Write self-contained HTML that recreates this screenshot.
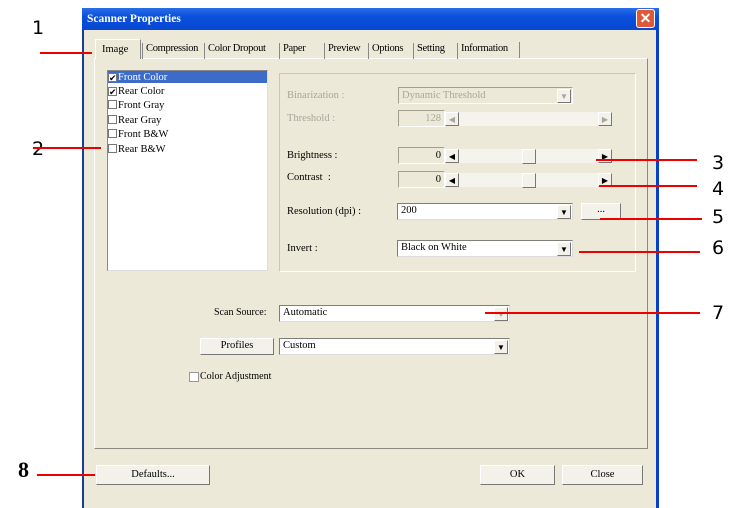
<!DOCTYPE html>
<html><head><style>
*{margin:0;padding:0;box-sizing:border-box}
body{width:734px;height:493px;background:#fff;position:relative;overflow:hidden;font-family:"Liberation Serif",serif;font-size:10.5px;color:#000}
.a{position:absolute}
.win{left:82px;top:8px;width:577px;height:500px;background:#ece9d8;border-left:2px solid #1a3c9c;border-right:3px solid #0841c8}
.title{left:82px;top:8px;width:577px;height:22px;background:linear-gradient(#2a6de8,#0a4fdc 40%,#0848d2);color:#fff;font-weight:bold;font-size:11.5px;padding:5px 0 0 5px}
.x{left:636px;top:9px;width:19px;height:19px;background:#dc5a3a;border:1px solid #fff;border-radius:3px;color:#fff;font:bold 14px "Liberation Sans",sans-serif;text-align:center;line-height:16px}
.panel{left:94px;top:58px;width:554px;height:391px;border:1px solid #fff;border-right-color:#8a8a80;border-bottom-color:#8a8a80}
.tab{top:43px;height:16px;font-size:10.5px;letter-spacing:-0.3px;border-left:1px solid #888;padding-left:3px;white-space:nowrap}
.sunk{background:#ece9d8;border:1px solid #a0a090;border-right-color:#fff;border-bottom-color:#fff}
.white{background:#fff;border:1px solid #7f7f78;border-right-color:#ddd;border-bottom-color:#ddd}
.btn{background:#f2f1ea;border:1px solid #fff;border-right-color:#777;border-bottom-color:#777;text-align:center;font-size:10.5px}
.dd{width:14px;height:14px;font-size:8px;text-align:center;line-height:13px}
.gray{color:#a8a69a}
.ln{background:#e00;height:2px}
.num{font:19px "DejaVu Sans","Liberation Sans",sans-serif}
.li{left:108px;height:11px;font-size:10.5px;line-height:11px}
.cb{display:inline-block;width:9px;height:9px;border:1px solid #777;margin-right:1px;vertical-align:-1px;font-size:9px;line-height:8px;text-align:center}
.trk{background:#f4f3ec}
</style></head><body>
<div class="a win"></div>
<div class="a title">Scanner Properties</div>
<div class="a x">✕</div>
<div class="a panel"></div>
<div class="a" style="left:95px;top:39px;width:46px;height:20px;background:#ece9d8;border:1px solid #fff;border-bottom:none;border-right-color:#888;padding:4px 0 0 6px">Image</div>
<div class="a tab" style="left:142px">Compression</div>
<div class="a tab" style="left:204px">Color Dropout</div>
<div class="a tab" style="left:279px">Paper</div>
<div class="a tab" style="left:324px">Preview</div>
<div class="a tab" style="left:368px">Options</div>
<div class="a tab" style="left:413px">Setting</div>
<div class="a tab" style="left:457px">Information</div>
<div class="a" style="left:519px;top:42px;width:1px;height:16px;background:#888"></div>

<div class="a" style="left:107px;top:70px;width:161px;height:201px;background:#fff;border:1px solid #888;border-right-color:#ddd;border-bottom-color:#ddd"></div>
<div class="a" style="left:108px;top:71px;width:159px;height:12px;background:#3d6cc8"></div>
<div class="a li" style="top:72px;color:#fff"><span class="cb" style="background:#fff;color:#000">✔</span>Front Color</div>
<div class="a li" style="top:86px"><span class="cb">✔</span>Rear Color</div>
<div class="a li" style="top:100px"><span class="cb"></span>Front Gray</div>
<div class="a li" style="top:115px"><span class="cb"></span>Rear Gray</div>
<div class="a li" style="top:129px"><span class="cb"></span>Front B&amp;W</div>
<div class="a li" style="top:144px"><span class="cb"></span>Rear B&amp;W</div>

<div class="a" style="left:279px;top:73px;width:357px;height:199px;border:1px solid #c8c6b8;border-right-color:#fff;border-bottom-color:#fff"></div>
<div class="a gray" style="left:287px;top:90px">Binarization :</div>
<div class="a sunk gray" style="left:398px;top:87px;width:175px;height:17px;padding:2px 3px">Dynamic Threshold</div>
<div class="a btn dd gray" style="left:557px;top:89px">▼</div>
<div class="a gray" style="left:287px;top:113px">Threshold :</div>
<div class="a sunk gray" style="left:398px;top:110px;width:47px;height:17px;text-align:right;padding:2px 3px">128</div>
<div class="a trk" style="left:459px;top:112px;width:139px;height:14px"></div>
<div class="a btn dd gray" style="left:445px;top:112px">◀</div>
<div class="a btn dd gray" style="left:598px;top:112px">▶</div>

<div class="a" style="left:287px;top:150px">Brightness :</div>
<div class="a sunk" style="left:398px;top:147px;width:47px;height:17px;text-align:right;padding:2px 3px">0</div>
<div class="a trk" style="left:459px;top:149px;width:139px;height:14px"></div>
<div class="a btn dd" style="left:445px;top:149px">◀</div>
<div class="a btn" style="left:522px;top:149px;width:14px;height:15px"></div>
<div class="a btn dd" style="left:598px;top:149px">▶</div>
<div class="a" style="left:287px;top:172px">Contrast &nbsp;:</div>
<div class="a sunk" style="left:398px;top:171px;width:47px;height:17px;text-align:right;padding:2px 3px">0</div>
<div class="a trk" style="left:459px;top:173px;width:139px;height:14px"></div>
<div class="a btn dd" style="left:445px;top:173px">◀</div>
<div class="a btn" style="left:522px;top:173px;width:14px;height:15px"></div>
<div class="a btn dd" style="left:598px;top:173px">▶</div>

<div class="a" style="left:287px;top:206px">Resolution (dpi) :</div>
<div class="a white" style="left:397px;top:203px;width:176px;height:17px;padding:1px 3px">200</div>
<div class="a btn dd" style="left:557px;top:205px">▼</div>
<div class="a btn" style="left:581px;top:203px;width:40px;height:17px">...</div>
<div class="a" style="left:287px;top:243px">Invert :</div>
<div class="a white" style="left:397px;top:240px;width:176px;height:17px;padding:1px 3px">Black on White</div>
<div class="a btn dd" style="left:557px;top:242px">▼</div>

<div class="a" style="left:214px;top:307px;font-size:10px">Scan Source:</div>
<div class="a white" style="left:279px;top:305px;width:231px;height:17px;padding:1px 3px">Automatic</div>
<div class="a btn dd gray" style="left:494px;top:307px">▼</div>
<div class="a btn" style="left:200px;top:338px;width:74px;height:17px;padding-top:1px">Profiles</div>
<div class="a white" style="left:279px;top:338px;width:231px;height:17px;padding:1px 3px">Custom</div>
<div class="a btn dd" style="left:494px;top:340px">▼</div>
<div class="a" style="left:189px;top:372px;width:10px;height:10px;background:#fff;border:1px solid #999"></div>
<div class="a" style="left:200px;top:371px;font-size:10px">Color Adjustment</div>

<div class="a btn" style="left:96px;top:465px;width:114px;height:20px;padding-top:3px">Defaults...</div>
<div class="a btn" style="left:480px;top:465px;width:75px;height:20px;padding-top:3px">OK</div>
<div class="a btn" style="left:562px;top:465px;width:81px;height:20px;padding-top:3px">Close</div>

<div class="a num" style="left:32px;top:17px">1</div>
<div class="a ln" style="left:40px;top:52px;width:52px"></div>
<div class="a num" style="left:32px;top:138px">2</div>
<div class="a ln" style="left:33px;top:147px;width:68px"></div>
<div class="a num" style="left:712px;top:152px">3</div>
<div class="a ln" style="left:596px;top:159px;width:101px"></div>
<div class="a num" style="left:712px;top:178px">4</div>
<div class="a ln" style="left:599px;top:185px;width:98px"></div>
<div class="a num" style="left:712px;top:206px">5</div>
<div class="a ln" style="left:600px;top:218px;width:102px"></div>
<div class="a num" style="left:712px;top:237px">6</div>
<div class="a ln" style="left:579px;top:251px;width:121px"></div>
<div class="a num" style="left:712px;top:302px">7</div>
<div class="a ln" style="left:485px;top:312px;width:215px"></div>
<div class="a" style="left:18px;top:457px;font:bold 22px 'Liberation Serif',serif">8</div>
<div class="a ln" style="left:37px;top:474px;width:58px"></div>
</body></html>
